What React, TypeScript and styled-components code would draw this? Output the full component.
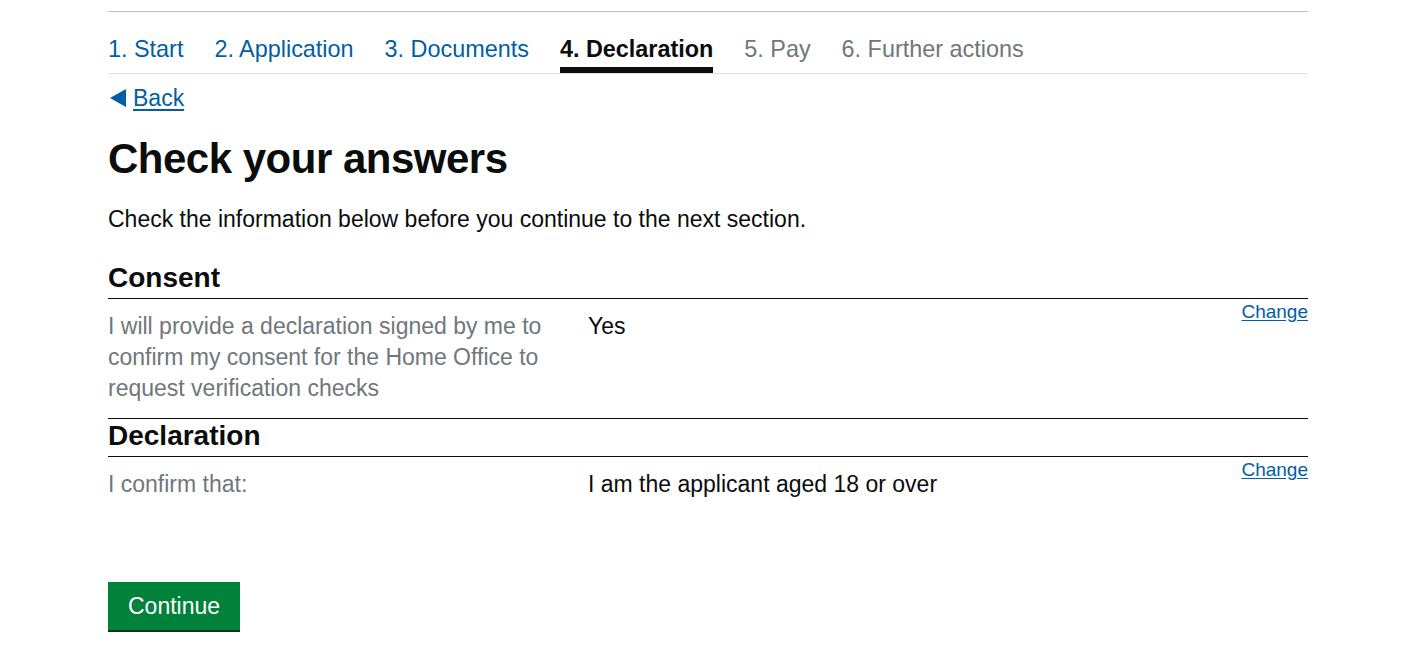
import React from "react";
import styled, { createGlobalStyle } from "styled-components";

const Global = createGlobalStyle`
  html, body { margin: 0; padding: 0; background: #ffffff; }
  body {
    font-family: "Liberation Sans", Arial, sans-serif;
    color: #0b0c0c;
    -webkit-font-smoothing: antialiased;
  }
`;

const Page = styled.div`
  width: 1200px;
  margin-left: 108px;
  padding-top: 11px;
  padding-bottom: 35px;
`;

const StepNav = styled.nav`
  display: flex;
  gap: 31px;
  border-top: 1px solid #bfc1c3;
  border-bottom: 1px solid #dee0e2;
  height: 61px;
  align-items: flex-end;
`;

const Step = styled.a<{ $state: "done" | "active" | "todo" }>`
  display: block;
  font-size: 23.4px;
  line-height: 28px;
  padding-bottom: 4px;
  text-decoration: none;
  white-space: nowrap;
  font-weight: ${(p) => (p.$state === "active" ? 700 : 400)};
  color: ${(p) =>
    p.$state === "done" ? "#005ea5" : p.$state === "active" ? "#0b0c0c" : "#6f777b"};
  border-bottom: 6px solid ${(p) => (p.$state === "active" ? "#0b0c0c" : "transparent")};
`;

const BackLink = styled.a`
  display: inline-flex;
  align-items: center;
  gap: 7px;
  margin-top: 10px;
  font-size: 23px;
  line-height: 28px;
  color: #005ea5;
  text-decoration: none;
  padding-left: 2px;
`;

const Triangle = styled.span`
  display: inline-block;
  width: 0;
  height: 0;
  border-style: solid;
  border-width: 9px 16px 9px 0;
  border-color: transparent #005ea5 transparent transparent;
`;

const BackText = styled.span`
  text-decoration: underline;
  text-underline-offset: 3px;
  text-decoration-thickness: 2px;
`;

const Title = styled.h1`
  margin: 22px 0 0;
  font-size: 42px;
  line-height: 50px;
  font-weight: 700;
  letter-spacing: -0.5px;
`;

const Lead = styled.p`
  margin: 20px 0 0;
  font-size: 23px;
  line-height: 31px;
`;

const SectionHeading = styled.h2<{ $first?: boolean }>`
  margin: ${(p) => (p.$first ? "26px" : "0")} 0 0;
  font-size: 28px;
  line-height: 34px;
  font-weight: 700;
  padding-bottom: 3px;
  border-bottom: 1px solid #0b0c0c;
`;

const Row = styled.div<{ $bordered?: boolean }>`
  display: grid;
  grid-template-columns: 480px 1fr auto;
  border-bottom: ${(p) => (p.$bordered ? "1px solid #0b0c0c" : "none")};
`;

const Key = styled.div`
  padding: 12px 30px 14px 0;
  font-size: 23px;
  line-height: 31px;
  color: #6f777b;
`;

const Value = styled.div`
  padding: 12px 20px 14px 0;
  font-size: 23px;
  line-height: 31px;
  color: #0b0c0c;
`;

const Action = styled.div`
  padding-top: 3px;
  font-size: 19px;
  line-height: 19px;
`;

const ChangeLink = styled.a`
  color: #005ea5;
  text-decoration: underline;
  text-underline-offset: 2px;
`;

const Button = styled.button`
  display: inline-block;
  margin-top: 68px;
  padding: 10px 20px;
  border: 0;
  background: #00823b;
  color: #ffffff;
  font-family: "Liberation Sans", Arial, sans-serif;
  font-size: 23px;
  line-height: 28px;
  box-shadow: 0 2px 0 #003618;
  cursor: pointer;
`;

const steps: { label: string; state: "done" | "active" | "todo" }[] = [
  { label: "1. Start", state: "done" },
  { label: "2. Application", state: "done" },
  { label: "3. Documents", state: "done" },
  { label: "4. Declaration", state: "active" },
  { label: "5. Pay", state: "todo" },
  { label: "6. Further actions", state: "todo" },
];

export default function App() {
  return (
    <>
      <Global />
      <Page>
        <StepNav>
          {steps.map((s) => (
            <Step key={s.label} $state={s.state} href="#">
              {s.label}
            </Step>
          ))}
        </StepNav>
        <BackLink href="#">
          <Triangle />
          <BackText>Back</BackText>
        </BackLink>
        <Title>Check your answers</Title>
        <Lead>Check the information below before you continue to the next section.</Lead>

        <SectionHeading $first>Consent</SectionHeading>
        <Row $bordered>
          <Key>
            I will provide a declaration signed by me to confirm my consent for the Home Office to
            request verification checks
          </Key>
          <Value>Yes</Value>
          <Action>
            <ChangeLink href="#">Change</ChangeLink>
          </Action>
        </Row>

        <SectionHeading>Declaration</SectionHeading>
        <Row>
          <Key>I confirm that:</Key>
          <Value>I am the applicant aged 18 or over</Value>
          <Action>
            <ChangeLink href="#">Change</ChangeLink>
          </Action>
        </Row>

        <Button type="button">Continue</Button>
      </Page>
    </>
  );
}
